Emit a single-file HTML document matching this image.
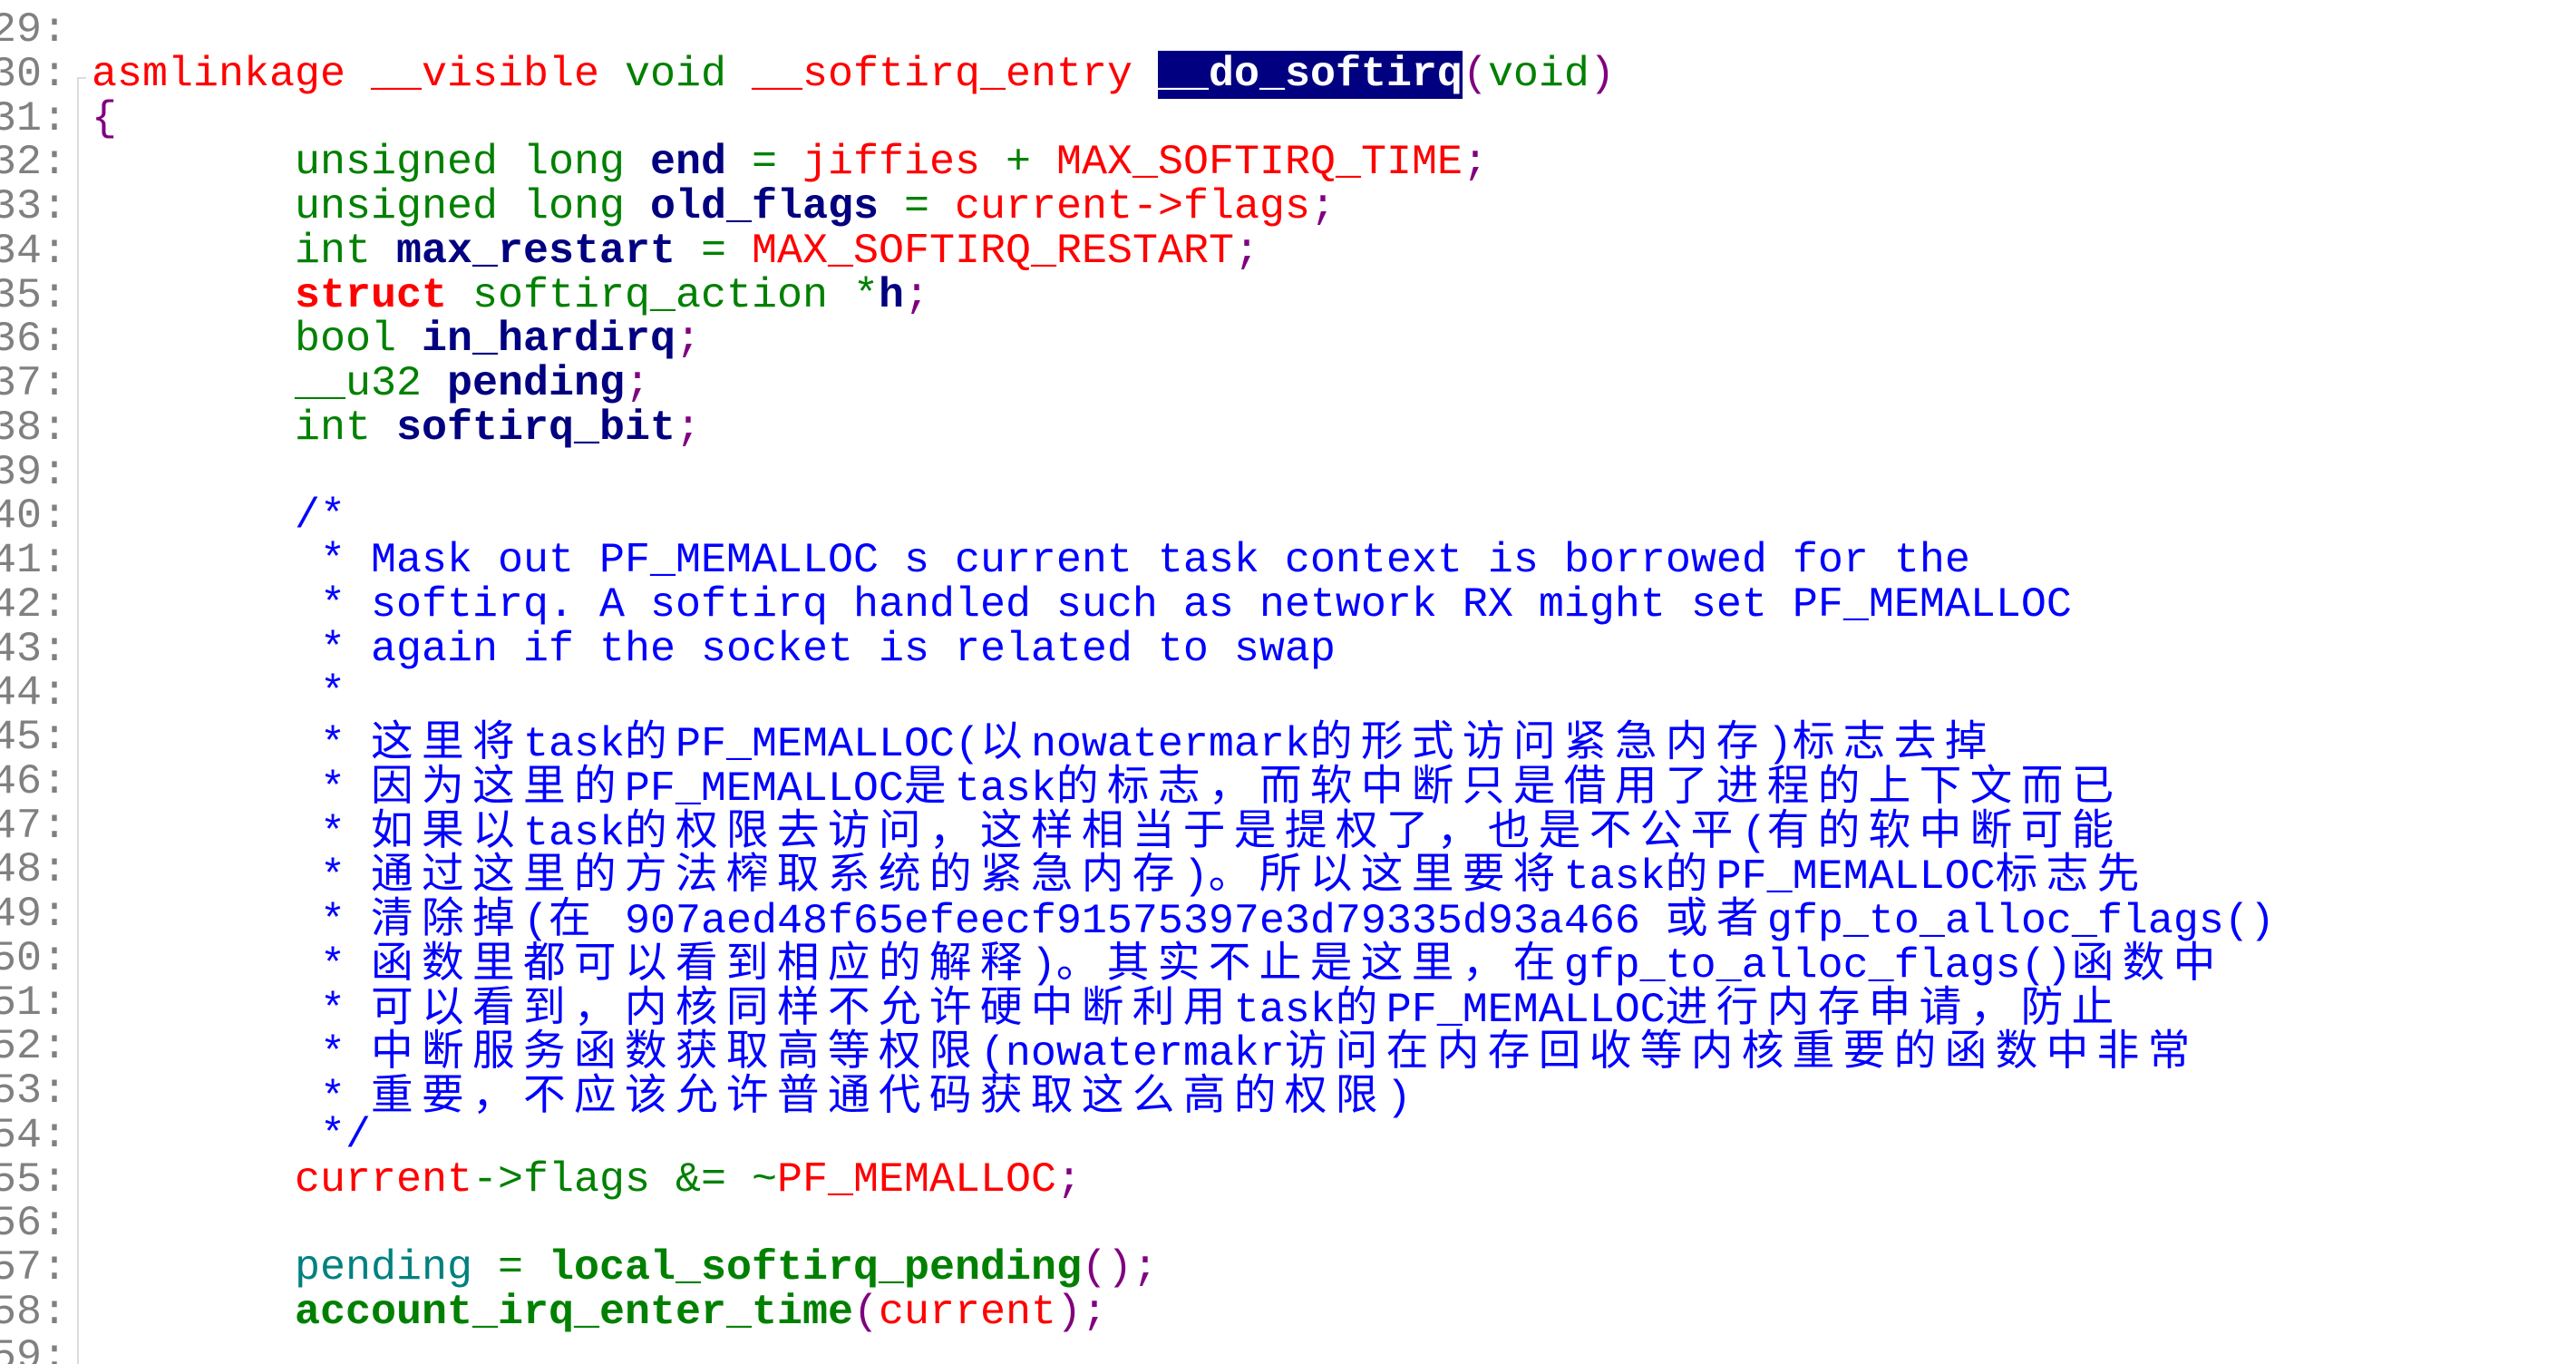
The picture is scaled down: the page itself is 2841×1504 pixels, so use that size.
<!DOCTYPE html>
<html><head><meta charset="utf-8">
<style>
html,body{margin:0;padding:0;background:#fff;width:2841px;height:1504px;overflow:hidden;}
body{position:relative;font-family:"Liberation Mono",monospace;font-size:46.67px;}
.l{position:absolute;left:101px;height:48.75px;line-height:48.75px;white-space:pre;}
.n{position:absolute;left:-10px;height:48.75px;line-height:48.75px;white-space:pre;color:#808080;}
.sep{position:absolute;left:85px;top:85px;width:2px;height:1419px;background:#dcdcdc;}
.tick{position:absolute;left:85px;top:85px;width:10px;height:2px;background:#dcdcdc;}
.r{color:#ff0000}.g{color:#008000}.b{color:#000080;font-weight:bold}.p{color:#800080}
.t{color:#008080}.gb{color:#008000;font-weight:bold}.rb{color:#ff0000;font-weight:bold}
.c{color:#0000ff}
i{font-style:normal;font-family:"Noto Sans CJK SC",sans-serif;font-size:46.67px;letter-spacing:9.33px;}
.sel{background:#000080;color:#fff;font-weight:bold;}
</style></head><body>
<div class="sep"></div><div class="tick"></div>
<div class="n" style="top:10px">29:</div>
<div class="n" style="top:58.75px">30:</div>
<div class="n" style="top:107.5px">31:</div>
<div class="n" style="top:156.25px">32:</div>
<div class="n" style="top:205px">33:</div>
<div class="n" style="top:253.75px">34:</div>
<div class="n" style="top:302.5px">35:</div>
<div class="n" style="top:351.25px">36:</div>
<div class="n" style="top:400px">37:</div>
<div class="n" style="top:448.75px">38:</div>
<div class="n" style="top:497.5px">39:</div>
<div class="n" style="top:546.25px">40:</div>
<div class="n" style="top:595px">41:</div>
<div class="n" style="top:643.75px">42:</div>
<div class="n" style="top:692.5px">43:</div>
<div class="n" style="top:741.25px">44:</div>
<div class="n" style="top:790px">45:</div>
<div class="n" style="top:838.75px">46:</div>
<div class="n" style="top:887.5px">47:</div>
<div class="n" style="top:936.25px">48:</div>
<div class="n" style="top:985px">49:</div>
<div class="n" style="top:1033.75px">50:</div>
<div class="n" style="top:1082.5px">51:</div>
<div class="n" style="top:1131.25px">52:</div>
<div class="n" style="top:1180px">53:</div>
<div class="n" style="top:1228.75px">54:</div>
<div class="n" style="top:1277.5px">55:</div>
<div class="n" style="top:1326.25px">56:</div>
<div class="n" style="top:1375px">57:</div>
<div class="n" style="top:1423.75px">58:</div>
<div class="n" style="top:1472.5px">59:</div>

<div class="l" style="top:58.75px"><span class="r">asmlinkage __visible</span> <span class="g">void</span> <span class="r">__softirq_entry</span> <span class="sel">__do_softirq</span><span class="p">(</span><span class="g">void</span><span class="p">)</span></div>
<div class="l" style="top:107.5px"><span class="p">{</span></div>
<div class="l" style="top:156.25px">        <span class="g">unsigned long</span> <span class="b">end</span> <span class="g">=</span> <span class="r">jiffies</span> <span class="g">+</span> <span class="r">MAX_SOFTIRQ_TIME</span><span class="p">;</span></div>
<div class="l" style="top:205px">        <span class="g">unsigned long</span> <span class="b">old_flags</span> <span class="g">=</span> <span class="r">current-&gt;flags</span><span class="p">;</span></div>
<div class="l" style="top:253.75px">        <span class="g">int</span> <span class="b">max_restart</span> <span class="g">=</span> <span class="r">MAX_SOFTIRQ_RESTART</span><span class="p">;</span></div>
<div class="l" style="top:302.5px">        <span class="rb">struct</span> <span class="g">softirq_action *</span><span class="b">h</span><span class="p">;</span></div>
<div class="l" style="top:351.25px">        <span class="g">bool</span> <span class="b">in_hardirq</span><span class="p">;</span></div>
<div class="l" style="top:400px">        <span class="g">__u32</span> <span class="b">pending</span><span class="p">;</span></div>
<div class="l" style="top:448.75px">        <span class="g">int</span> <span class="b">softirq_bit</span><span class="p">;</span></div>
<div class="l c" style="top:546.25px">        /*</div>
<div class="l c" style="top:595px">         * Mask out PF_MEMALLOC s current task context is borrowed for the</div>
<div class="l c" style="top:643.75px">         * softirq. A softirq handled such as network RX might set PF_MEMALLOC</div>
<div class="l c" style="top:692.5px">         * again if the socket is related to swap</div>
<div class="l c" style="top:741.25px">         *</div>
<div class="l c" style="top:790px">         * <i>这里将</i>task<i>的</i>PF_MEMALLOC(<i>以</i>nowatermark<i>的形式访问紧急内存</i>)<i>标志去掉</i></div>
<div class="l c" style="top:838.75px">         * <i>因为这里的</i>PF_MEMALLOC<i>是</i>task<i>的标志，而软中断只是借用了进程的上下文而已</i></div>
<div class="l c" style="top:887.5px">         * <i>如果以</i>task<i>的权限去访问，这样相当于是提权了，也是不公平</i>(<i>有的软中断可能</i></div>
<div class="l c" style="top:936.25px">         * <i>通过这里的方法榨取系统的紧急内存</i>)<i>。所以这里要将</i>task<i>的</i>PF_MEMALLOC<i>标志先</i></div>
<div class="l c" style="top:985px">         * <i>清除掉</i>(<i>在</i> 907aed48f65efeecf91575397e3d79335d93a466 <i>或者</i>gfp_to_alloc_flags()</div>
<div class="l c" style="top:1033.75px">         * <i>函数里都可以看到相应的解释</i>)<i>。其实不止是这里，在</i>gfp_to_alloc_flags()<i>函数中</i></div>
<div class="l c" style="top:1082.5px">         * <i>可以看到，内核同样不允许硬中断利用</i>task<i>的</i>PF_MEMALLOC<i>进行内存申请，防止</i></div>
<div class="l c" style="top:1131.25px">         * <i>中断服务函数获取高等权限</i>(nowatermakr<i>访问在内存回收等内核重要的函数中非常</i></div>
<div class="l c" style="top:1180px">         * <i>重要，不应该允许普通代码获取这么高的权限</i>)</div>
<div class="l c" style="top:1228.75px">         */</div>
<div class="l" style="top:1277.5px">        <span class="r">current</span><span class="g">-&gt;flags &amp;= ~</span><span class="r">PF_MEMALLOC</span><span class="p">;</span></div>
<div class="l" style="top:1375px">        <span class="t">pending</span> <span class="g">=</span> <span class="gb">local_softirq_pending</span><span class="p">();</span></div>
<div class="l" style="top:1423.75px">        <span class="gb">account_irq_enter_time</span><span class="p">(</span><span class="r">current</span><span class="p">);</span></div>
</body></html>
